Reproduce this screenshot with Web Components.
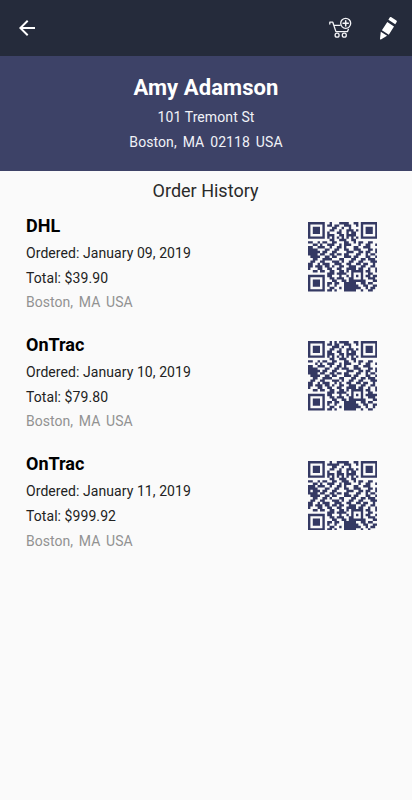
<!DOCTYPE html>
<html lang="en"><head><meta charset="utf-8"><title>Customer</title>
<style>html,body{margin:0;height:100%;background:#fafafa;font-family:Roboto,"Liberation Sans",sans-serif}</style></head><body>
<customer-page></customer-page>
<script>
function define(name, html, init){
  customElements.define(name, class extends HTMLElement{
    constructor(){super();this.attachShadow({mode:'open'}).innerHTML=html;}
    connectedCallback(){if(init)init(this,this.shadowRoot);}
  });
}
define('app-toolbar',`<style>:host{display:flex;height:56px;background:#252b3b;align-items:center;justify-content:space-between;padding:0 12px 0 15px;box-sizing:border-box}
.actions{display:flex;gap:24px;align-items:center}svg{display:block}</style>
<svg width="24" height="24" viewBox="0 0 24 24" fill="#fff"><path d="M20 11H7.8l5.6-5.6L12 4l-8 8 8 8 1.4-1.4L7.8 13H20z"/></svg>
<div class="actions"><svg width="24" height="24" viewBox="0 0 24 24" fill="none" stroke="#f4f5f8" stroke-width="1.3" stroke-linecap="round" stroke-linejoin="round"><path d="M1.8 8.1V6.2h3l3.1 9.4h11.6l.9-2.3M6 9.4h6"/><circle cx="9.1" cy="19.2" r="2"/><circle cx="16.3" cy="19.2" r="2"/><circle cx="17.7" cy="7.3" r="5"/><path d="M17.7 4.7v5.2M15.1 7.3h5.2" stroke-width="1.5"/></svg>
<svg width="24" height="24" viewBox="0 0 24 24" fill="#fff"><path d="M12.4 3.7 13.7 1.4Q14.2.6 15 1.1L20.4 4.6Q21.2 5.2 20.7 6L19.2 8.2zM11.3 6.1 18 10.5l-5.2 8.2-6.9-4.5zM4.8 15.7l6.3 4.1-6.2 3.7Q3.9 23.8 4 22.8z"/></svg></div>`);
define('customer-header',`<style>:host{display:flex;flex-direction:column;align-items:center;height:115px;background:#3d4267;color:#fff;padding-top:17px;box-sizing:border-box}
.name{font-weight:700;font-size:22px;line-height:29px;letter-spacing:.09px}.line{font-size:14px;line-height:25px;letter-spacing:.1px;white-space:pre;color:#f1f2f8}.name+div{margin-top:3px}.city{letter-spacing:.08px;word-spacing:-.6px}</style>
<div class="name"><slot name="name"></slot></div><div class="line"><slot name="street"></slot></div><div class="line city"><slot name="city"></slot></div>`);
const QR=[
'11111110010001111001101111111',
'10000010110110011100101000001',
'10111010001100100100001011101',
'10111010011001001110101011101',
'10111010100011001011001011101',
'10000010111001101111001000001',
'11111110101010101010101111111',
'00000000011001110011000000000',
'11001011001100011001011001100',
'00110100111001011100010011001',
'11001110010011010001100111000',
'11110001100110011001110001101',
'11111011001100001110011011001',
'11110110011011011000110010110',
'01111001101100011101100011001',
'00110011110001100011001101110',
'01100110001110100110011000111',
'11001011100111001100110110010',
'11011101101001100111001100110',
'10001100110011001111011001001',
'00110110011001101011111011001',
'00000000111011110010001001100',
'11111110110001001010101011011',
'10000010011011100110001001110',
'10111010001100110111111100011',
'10111010110110011111001101100',
'10111010100100011111100110011',
'10000010011001011111110010110',
'11111110110100011111001001100'];
const CHANGES={1:[],2:[[0,11],[2,12],[4,9],[9,2],[11,14],[17,12],[22,26],[27,26]],3:[[0,12],[1,10],[5,12],[8,14],[10,2],[12,1],[15,8],[18,11],[22,27],[28,26]]};
define('qr-code',`<style>:host{display:block;width:69.6px;height:70px}svg{display:block}path{fill:#343963}</style><svg width="69.6" height="69.6" viewBox="0 0 29 29"><path/></svg>`,(h,s)=>{
  const rows=QR.map(r=>[...r]);
  for(const [y,x] of CHANGES[h.getAttribute('variant')])rows[y][x]=rows[y][x]==='1'?'0':'1';
  s.querySelector('path').setAttribute('d',rows.map((r,y)=>[...r.join('').matchAll(/1+/g)].map(m=>`M${m.index} ${y}h${m[0].length}v1h-${m[0].length}z`).join('')).join(''));
});
define('order-card',`<style>:host{display:flex;justify-content:space-between;height:119.2px;padding:0 34.8px 0 26px;box-sizing:border-box;color:#222;font-size:14px;line-height:24.6px}
.c{font-size:18px;font-weight:700;line-height:26px;margin-bottom:2px;color:#000}.t{letter-spacing:.07px}.p{color:#929292;white-space:pre;word-spacing:-.6px;letter-spacing:.02px}qr-code{margin-top:9.2px}</style>
<div><div class="c"><slot name="carrier"></slot></div><div class="t"><slot name="date"></slot></div><div class="t"><slot name="total"></slot></div><div class="p">Boston,  MA  USA</div></div>`,(h,s)=>{
  const qr=document.createElement('qr-code');
  qr.setAttribute('variant',h.getAttribute('variant'));
  s.append(qr);
});
define('customer-page',`<style>:host{display:block;min-height:100vh}h2{margin:0;height:42px;padding:8px 1px 0 0;box-sizing:border-box;text-align:center;font-weight:400;font-size:18px;line-height:24px;color:#2a2a2a}</style>
<app-toolbar></app-toolbar>
<customer-header><span slot="name">Amy Adamson</span><span slot="street">101 Tremont St</span><span slot="city">Boston,  MA  02118  USA</span></customer-header>
<h2>Order History</h2>
<order-card variant="1"><span slot="carrier">DHL</span><span slot="date">Ordered: January 09, 2019</span><span slot="total">Total: $39.90</span></order-card>
<order-card variant="2"><span slot="carrier">OnTrac</span><span slot="date">Ordered: January 10, 2019</span><span slot="total">Total: $79.80</span></order-card>
<order-card variant="3"><span slot="carrier">OnTrac</span><span slot="date">Ordered: January 11, 2019</span><span slot="total">Total: $999.92</span></order-card>`);
</script></body></html>
